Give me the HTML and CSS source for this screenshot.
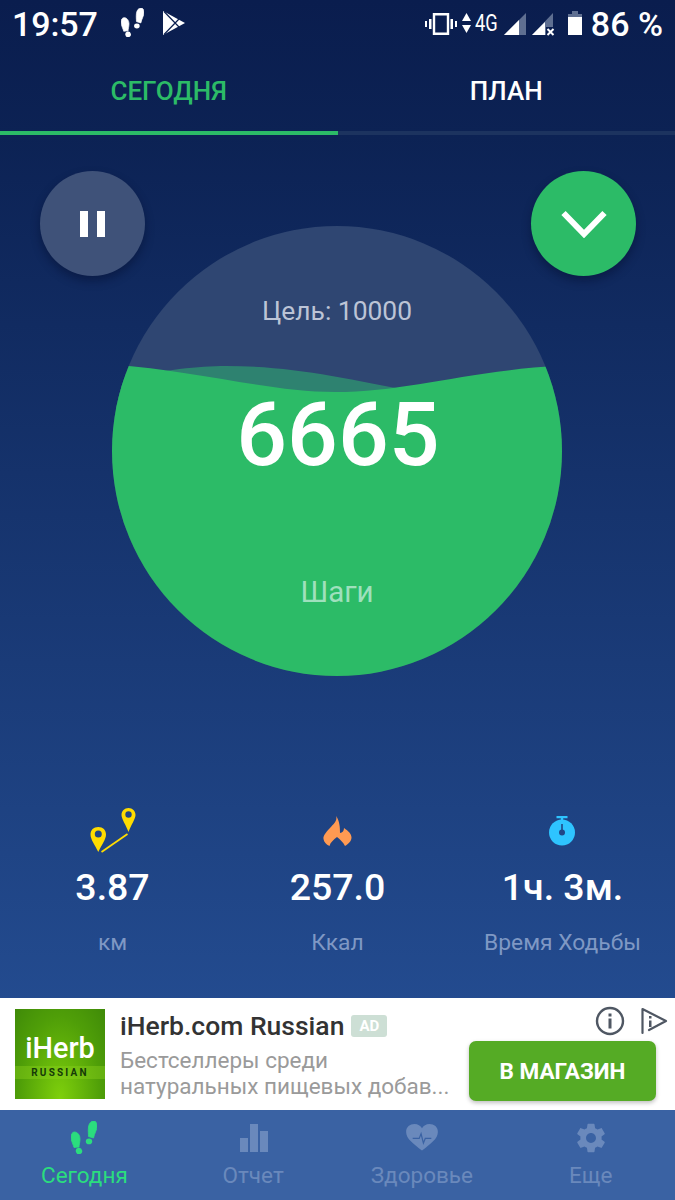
FILE: index.html
```html
<!DOCTYPE html>
<html lang="ru">
<head>
<meta charset="utf-8">
<title>Шаги</title>
<link rel="stylesheet" href="styles.css">
</head>
<body>
<svg class="defs" width="0" height="0" aria-hidden="true">
  <symbol id="feet" viewBox="0 0 26 33">
    <path d="M3.500 11 C6.500 11 9 14 9 18 C9 21 8 24 8 26 L3 26.500 C2.500 24 0 20 0 16 C0 13 1.500 11 3.500 11Z" fill="currentColor" stroke="currentColor" stroke-width=".8"/>
    <ellipse cx="8" cy="30" rx="3.200" ry="3.300" transform="rotate(-15 8 30)" fill="currentColor"/>
    <path d="M22.500 0 C25 0 26 2 26 5 C26 9 23.500 12 22.500 17 L17.500 15.500 C17.500 13 17 10 17.500 6 C18 2.500 20 0 22.500 0Z" fill="currentColor" stroke="currentColor" stroke-width=".8"/>
    <ellipse cx="18" cy="20.400" rx="3.200" ry="2.800" fill="currentColor"/>
  </symbol>
</svg>
<div class="app">
  <header class="status">
    <span class="time">19:57</span>
    <svg class="st-feet" width="23" height="29"><use href="#feet"/></svg>
    <svg class="st-play" width="22" height="24" viewBox="0 0 22 24"><path d="M0 0 L22 12 L0 24Z" fill="#fff"/><path d="M1 .5 L16 16 M1 23.500 L16 8" stroke="#0a1e4f" stroke-width="1.200" fill="none"/></svg>
    <span class="st-spacer"></span>
    <svg class="st-vib" width="32" height="22" viewBox="0 0 32 22"><path d="M9 1.200h14v19.600H9z" fill="none" stroke="#fff" stroke-width="2.400"/><path d="M4 6h2.500v10H4zM0 8h2v6H0zM25.500 6H28v10h-2.500zM30 8h2v6h-2z" fill="#fff"/></svg>
    <svg class="st-arrows" width="9" height="20" viewBox="0 0 9 20"><path d="M4.500 0 L9 8 H0Z M0 12 H9 L4.500 20Z" fill="#fff"/></svg>
    <span class="st-4g">4G</span>
    <svg class="st-sig" width="22" height="22" viewBox="0 0 22 22"><path d="M22 0V22H0Z" fill="#5f6f91"/><path d="M15 7V22H0Z" fill="#fff"/></svg>
    <svg class="st-sig2" width="23" height="24" viewBox="0 0 23 24"><path d="M21 0V14H14V22H0Z" fill="#5f6f91"/><path d="M13 9V22H0Z" fill="#fff"/><path d="M15.500 16l6 6m0-6l-6 6" stroke="#fff" stroke-width="2"/></svg>
    <svg class="st-bat" width="14" height="24" viewBox="0 0 14 24"><path d="M4 0h6v3H4z M0 3h14v4H0z" fill="#5f6f91"/><path d="M0 6h14v18H0z" fill="#fff"/></svg>
    <span class="batt">86 %</span>
  </header>

  <nav class="tabs">
    <div class="tab active">СЕГОДНЯ</div>
    <div class="tab">ПЛАН</div>
  </nav>

  <main class="stage">
    <button class="fab fab-pause" aria-label="Пауза">
      <svg width="26" height="26" viewBox="0 0 26 26"><path d="M0 0h8v26H0zM17 0h8v26h-8z" fill="#fff"/></svg>
    </button>
    <button class="fab fab-down" aria-label="Вниз">
      <svg width="46" height="28" viewBox="0 0 46 28"><path d="M2.500 3 L23 24 L43.500 3" fill="none" stroke="#fff" stroke-width="6"/></svg>
    </button>
    <div class="dial">
      <svg class="dial-bg" width="450" height="450" viewBox="112 226 450 450">
        <defs><clipPath id="disc"><circle cx="337" cy="451" r="225"/></clipPath></defs>
        <g clip-path="url(#disc)">
          <rect x="112" y="226" width="450" height="450" fill="#2f4672"/>
          <path d="M100 382 C165 370 195 366 226 366 C290 366 345 378 415 392 L415 410 L100 410Z" fill="#2e8270"/>
          <path d="M100 364 C190 368 265 392 335 392 C410 392 470 369 575 365 V690 H100Z" fill="#2cbb67"/>
        </g>
      </svg>
      <div class="goal">Цель: 10000</div>
      <div class="count">6665</div>
      <div class="unit">Шаги</div>
    </div>
  </main>

  <section class="stats">
    <div class="stat">
      <svg class="stat-icon" width="50" height="48" viewBox="0 0 50 48">
        <path d="M10.300 19 C5.500 19 2.500 22 2.500 26.500 C2.500 31.500 7 37 10.300 44 C13.500 37 18 31.500 18 26.500 C18 22 15 19 10.300 19Z" fill="#ffdc00"/>
        <circle cx="10.300" cy="26" r="3.500" fill="#214686"/>
        <path d="M40.500 0 C36.500 0 33.500 3 33.500 7 C33.500 11 38 17 40.500 24 C43 17 47.500 11 47.500 7 C47.500 3 44.500 0 40.500 0Z" fill="#ffdc00"/>
        <circle cx="40.500" cy="6.500" r="3.200" fill="#214686"/>
        <path d="M13.500 44 L39.500 26" stroke="#ffdc00" stroke-width="1.800"/>
      </svg>
      <div class="value">3.87</div>
      <div class="label">км</div>
    </div>
    <div class="stat">
      <svg class="stat-icon" width="50" height="48" viewBox="0 0 50 48">
        <path transform="translate(2.500 2)" d="M20.700 6 C22 11 18 14 14 18.500 C10 23 7.500 26 8 29 C8.500 32 10.500 34.500 14 36 C15 32 18 30 21.500 27 C25 30 27.500 32 29.500 36 C33 34 36 31 36 27.500 C36 24 33 21 28.500 18 C28.500 21 27 22.500 24.500 23 C24.500 17 24 11 20.700 6Z" fill="#ff9a52"/>
      </svg>
      <div class="value">257.0</div>
      <div class="label">Ккал</div>
    </div>
    <div class="stat">
      <svg class="stat-icon" width="50" height="48" viewBox="0 0 50 48">
        <path d="M18.500 8h11v2.200h-11zM22.800 10h2.400v3h-2.400z" fill="#2ec4ff"/>
        <circle cx="24" cy="24.500" r="13" fill="#2ec4ff"/>
        <path d="M23.200 16h1.600v8h-1.600z" fill="#214686"/>
        <circle cx="24" cy="24.500" r="3" fill="#214686"/>
      </svg>
      <div class="value">1ч. 3м.</div>
      <div class="label">Время Ходьбы</div>
    </div>
  </section>

  <aside class="ad">
    <div class="ad-logo">
      <span class="ad-brand">iHerb</span>
      <span class="ad-band">RUSSIAN</span>
    </div>
    <div class="ad-text">
      <div class="ad-title-row">
        <span class="ad-title">iHerb.com Russian</span>
        <span class="ad-badge">AD</span>
      </div>
      <div class="ad-desc">Бестселлеры среди<br>натуральных пищевых добав...</div>
    </div>
    <div class="ad-side">
      <div class="ad-icons">
        <svg width="30" height="30" viewBox="0 0 30 30"><circle cx="15" cy="15" r="13" fill="none" stroke="#4f5763" stroke-width="2.400"/><path d="M13.500 7.500h3v3h-3zM13.500 12.500h3v10h-3z" fill="#4f5763"/></svg>
        <svg width="28" height="28" viewBox="0 0 28 28"><path d="M2.500 26 V2 L26 14 L9 23" fill="none" stroke="#4f5763" stroke-width="2.200" stroke-linejoin="round" stroke-linecap="round"/><path d="M9 9h2.500v2.500H9zM9 13.500h2.500V20H9z" fill="#4f5763"/></svg>
      </div>
      <div class="ad-cta">В МАГАЗИН</div>
    </div>
  </aside>

  <nav class="bottom">
    <div class="nav-item active">
      <svg width="26" height="33" class="nav-icon nav-feet"><use href="#feet"/></svg>
      <span>Сегодня</span>
    </div>
    <div class="nav-item">
      <svg width="30" height="30" viewBox="0 0 30 30" class="nav-icon nav-bars"><path d="M2 16h8v14H2zM12 2h8v28h-8zM22 9h8v21h-8z" fill="currentColor"/></svg>
      <span>Отчет</span>
    </div>
    <div class="nav-item">
      <svg width="32" height="28" viewBox="0 0 34 30" class="nav-icon nav-heart"><path d="M17 28.500 C8 21 0 16 0 8.500 C0 3 4 0 9 0 C12.500 0 15.500 2 17 4.500 C18.500 2 21.500 0 25 0 C30 0 34 3 34 8.500 C34 16 26 21 17 28.500Z" fill="currentColor"/><path d="M7 15.500h7l2-5 2.500 10 2-5h6.500" fill="none" stroke="#3a62a3" stroke-width="1.300"/></svg>
      <span>Здоровье</span>
    </div>
    <div class="nav-item">
      <svg width="34" height="34" viewBox="0 0 24 24" class="nav-icon nav-gear"><path fill="currentColor" d="M19.430 12.980c.04-.32.07-.64.07-.98s-.03-.66-.07-.98l2.110-1.650c.19-.15.240-.42.120-.64l-2-3.460c-.12-.22-.39-.3-.61-.22l-2.490 1c-.52-.4-1.080-.73-1.690-.98l-.38-2.650C14.460 2.180 14.250 2 14 2h-4c-.25 0-.46.18-.49.42l-.38 2.650c-.61.25-1.170.59-1.690.98l-2.490-1c-.23-.09-.49 0-.61.22l-2 3.460c-.13.22-.07.49.12.64l2.110 1.650c-.04.32-.07.65-.07.98s.03.66.07.98l-2.110 1.650c-.19.15-.24.42-.12.64l2 3.460c.12.22.39.3.61.22l2.490-1c.52.4 1.080.73 1.690.98l.38 2.650c.03.24.24.42.49.42h4c.25 0 .46-.18.49-.42l.38-2.650c.61-.25 1.170-.59 1.690-.98l2.490 1c.23.09.49 0 .61-.22l2-3.460c.12-.22.07-.49-.12-.64l-2.110-1.650zM12 15.500c-1.930 0-3.500-1.570-3.500-3.500s1.570-3.500 3.500-3.500 3.500 1.570 3.500 3.500-1.570 3.500-3.500 3.500z"/></svg>
      <span>Еще</span>
    </div>
  </nav>
</div>
</body>
</html>
```
FILE: styles.css
```css
* { box-sizing: border-box; }
html, body { margin: 0; padding: 0; }
body { font-family: Roboto, "Liberation Sans", sans-serif; }
.defs { position: absolute; }
.app {
  width: 675px;
  height: 1200px;
  display: flex;
  flex-direction: column;
  overflow: hidden;
  color: #fff;
  background: linear-gradient(180deg, #0a1d4e 0, #0c2254 135px, #234b8f 1000px);
}

/* status bar */
.status {
  height: 48px;
  display: flex;
  align-items: center;
  padding: 0 12px 0 12px;
}
.time { font-size: 34px; font-weight: 500; line-height: 48px; letter-spacing: -.1px; }
.st-feet { margin-left: 23px; margin-top: -4px; color: #fff; }
.st-play { margin-left: 19px; margin-top: -3px; }
.st-spacer { flex: 1; }
.st-vib { margin-right: 5px; }
.st-arrows { margin-right: 4px; margin-top: -2px; }
.st-4g {
  font-size: 24px;
  width: 23px;
  margin-right: 6px;
  margin-top: -3px;
  white-space: nowrap;
  transform: scaleX(.76);
  transform-origin: 0 50%;
}
.st-sig { margin-right: 6px; margin-top: -1px; }
.st-sig2 { margin-right: 13px; margin-top: 1px; }
.st-bat { margin-right: 9px; margin-top: -2px; }
.batt { font-size: 34px; font-weight: 500; line-height: 48px; white-space: nowrap; }

/* tabs */
.tabs { height: 87px; display: flex; }
.tab {
  flex: 1;
  display: flex;
  align-items: center;
  justify-content: center;
  padding-top: 2px;
  font-size: 26px;
  font-weight: 500;
  border-bottom: 4px solid #1c335f;
}
.tab.active { color: #2cbb67; border-bottom-color: #2cbb67; }

/* dial */
.stage {
  position: relative;
  padding-top: 91px;
  padding-right: 1px;
  display: flex;
  justify-content: center;
}
.fab {
  position: absolute;
  top: 36px;
  width: 105px;
  height: 105px;
  border: 0;
  padding: 0;
  border-radius: 50%;
  display: flex;
  align-items: center;
  justify-content: center;
  box-shadow: 0 5px 10px rgba(4, 14, 44, .45);
}
.fab-pause { left: 39.5px; padding-left: 2px; background: #3f5279; }
.fab-down { left: 531px; background: #2cbb67; }
.dial {
  position: relative;
  width: 450px;
  height: 450px;
  display: flex;
  flex-direction: column;
  align-items: center;
}
.dial-bg { position: absolute; left: 0; top: 0; }
.goal {
  position: relative;
  margin-top: 67px;
  font-size: 26.4px;
  line-height: 36px;
  color: #bcc4d6;
}
.count {
  position: relative;
  margin-top: 56px;
  left: 1px;
  font-size: 89.5px;
  font-weight: 500;
  line-height: 100px;
}
.unit {
  position: relative;
  margin-top: 89px;
  font-size: 29.5px;
  line-height: 36px;
  color: #9fe0bd;
}

/* stats */
.stats {
  margin-top: auto;
  display: flex;
  height: 192px;
}
.stat {
  width: 225px;
  display: flex;
  flex-direction: column;
  align-items: center;
}
.stat-icon { display: block; margin-top: 2px; }
.value { margin-top: 9px; font-size: 37.5px; font-weight: 500; line-height: 44px; }
.label { margin-top: 20px; font-size: 22.8px; line-height: 28px; color: #7f98c4; }

/* ad */
.ad {
  height: 112px;
  background: #fff;
  display: flex;
  padding: 11px 19px 0 15px;
}
.ad-logo {
  width: 90px;
  height: 90px;
  flex: none;
  display: flex;
  flex-direction: column;
  align-items: center;
  padding-top: 24px;
  background: radial-gradient(ellipse at 50% 100%, #7fd00c 0, #4f9e08 65%, #3f8a08 100%);
}
.ad-brand { font-size: 28.8px; line-height: 30px; color: #fff; font-weight: 500; }
.ad-band {
  width: 100%;
  margin-top: 3px;
  font-size: 10px;
  line-height: 13px;
  font-weight: 700;
  letter-spacing: 2.2px;
  text-align: center;
  color: #153a08;
  background: rgba(140, 210, 30, .4);
}
.ad-text { margin-left: 15px; flex: 1; min-width: 0; color: #333; }
.ad-title-row { display: flex; align-items: center; height: 34px; }
.ad-title { font-size: 26.5px; font-weight: 500; color: #333; line-height: 34px; white-space: nowrap; }
.ad-badge {
  margin-left: 7px;
  width: 36px;
  height: 22px;
  border-radius: 3px;
  background: #cddfd5;
  color: #fff;
  font-size: 15px;
  font-weight: 700;
  line-height: 22px;
  text-align: center;
}
.ad-desc { margin-top: 4px; font-size: 22.5px; line-height: 26px; color: #9a9a9a; white-space: nowrap; }
.ad-side { width: 187px; flex: none; display: flex; flex-direction: column; align-items: flex-end; }
.ad-icons { height: 28px; margin-top: -2px; display: flex; align-items: center; gap: 15px; margin-right: -12px; }
.ad-cta {
  width: 187px;
  height: 60px;
  margin-top: 6px;
  border-radius: 7px;
  background: #55ab25;
  box-shadow: 0 2px 4px rgba(0, 0, 0, .25);
  color: #fff;
  font-size: 22.5px;
  font-weight: 700;
  line-height: 60px;
  text-align: center;
}

/* bottom nav */
.bottom { height: 90px; display: flex; background: #3a62a3; }
.nav-item {
  width: 169px;
  position: relative;
  display: flex;
  flex-direction: column;
  align-items: center;
  justify-content: flex-end;
  color: #6a89bc;
  font-size: 22.5px;
  line-height: 28px;
  padding-bottom: 11px;
}
.nav-item.active { color: #2bdd7e; }
.nav-icon { display: block; }
.nav-feet { margin-bottom: 7px; }
.nav-bars { margin-bottom: 9px; }
.nav-heart { margin-bottom: 9px; }
.nav-gear { margin-bottom: 6px; }
```
